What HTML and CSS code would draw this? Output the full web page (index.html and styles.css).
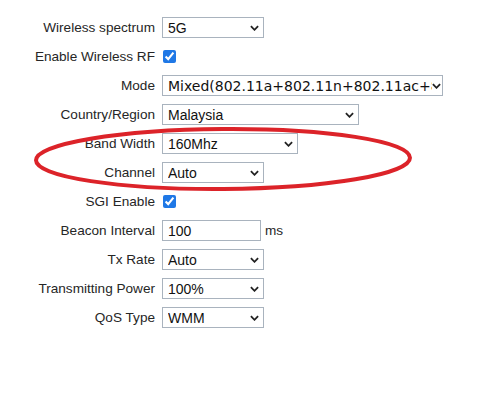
FILE: index.html
```html
<!DOCTYPE html>
<html lang="en">
<head>
    <meta charset="UTF-8">
    <meta name="viewport" content="width=device-width, initial-scale=1.0">
    <title>Wireless Settings</title>
    <link rel="stylesheet" href="styles.css">
</head>
<body>

    <form class="settings">
        <div class="row">
            <label>Wireless spectrum</label>
            <span class="pick w-sm">
                <select><option>5G</option><option>2.4G</option></select>
                <svg class="arrow" viewBox="0 0 10 6"><path d="M1 1l4 4 4-4"/></svg>
            </span>
        </div>
        <div class="row">
            <label>Enable Wireless RF</label>
            <input type="checkbox" class="check" checked>
        </div>
        <div class="row">
            <label>Mode</label>
            <span class="pick w-xl mode">
                <select><option>Mixed(802.11a+802.11n+802.11ac+802.11ax)</option></select>
                <svg class="arrow" viewBox="0 0 10 6"><path d="M1 1l4 4 4-4"/></svg>
            </span>
        </div>
        <div class="row">
            <label>Country/Region</label>
            <span class="pick w-lg">
                <select><option>Malaysia</option></select>
                <svg class="arrow" viewBox="0 0 10 6"><path d="M1 1l4 4 4-4"/></svg>
            </span>
        </div>
        <div class="row">
            <label>Band Width</label>
            <span class="pick w-md">
                <select><option>160Mhz</option><option>80Mhz</option></select>
                <svg class="arrow" viewBox="0 0 10 6"><path d="M1 1l4 4 4-4"/></svg>
            </span>
        </div>
        <div class="row">
            <label>Channel</label>
            <span class="pick w-sm">
                <select><option>Auto</option></select>
                <svg class="arrow" viewBox="0 0 10 6"><path d="M1 1l4 4 4-4"/></svg>
            </span>
        </div>
        <div class="row">
            <label>SGI Enable</label>
            <input type="checkbox" class="check" checked>
        </div>
        <div class="row">
            <label>Beacon Interval</label>
            <span class="field">
                <input type="text" class="text" value="100">
                <span class="unit">ms</span>
            </span>
        </div>
        <div class="row">
            <label>Tx Rate</label>
            <span class="pick w-sm">
                <select><option>Auto</option></select>
                <svg class="arrow" viewBox="0 0 10 6"><path d="M1 1l4 4 4-4"/></svg>
            </span>
        </div>
        <div class="row">
            <label>Transmitting Power</label>
            <span class="pick w-sm">
                <select><option>100%</option></select>
                <svg class="arrow" viewBox="0 0 10 6"><path d="M1 1l4 4 4-4"/></svg>
            </span>
        </div>
        <div class="row">
            <label>QoS Type</label>
            <span class="pick w-sm">
                <select><option>WMM</option></select>
                <svg class="arrow" viewBox="0 0 10 6"><path d="M1 1l4 4 4-4"/></svg>
            </span>
        </div>
    </form>

    <!-- hand-drawn highlight round Band Width / Channel -->
    <svg class="mark" viewBox="0 0 500 396">
        <ellipse cx="223" cy="159" rx="187" ry="30" transform="rotate(-0.4 223 159)"/>
    </svg>

</body>
</html>
```

FILE: styles.css
```css
body {
    margin: 0;
    padding: 0;
    background-color: #fff;
    font-family: "Liberation Sans", Arial, sans-serif;
    font-size: 13.6px;
    color: #262626;
}
.settings {
    padding-top: 13px;
}
.row {
    display: grid;
    grid-template-columns: 155px auto;
    column-gap: 7px;
    align-items: center;
    height: 29px;
}
.row label {
    text-align: right;
    white-space: nowrap;
}
.pick {
    position: relative;
    display: inline-block;
    justify-self: start;
    height: 21px;
}
.pick select {
    appearance: none;
    -webkit-appearance: none;
    box-sizing: border-box;
    width: 100%;
    height: 21px;
    margin: 0;
    padding: 0 20px 0 5px;
    border: 1px solid #a9b3be;
    border-radius: 0;
    background-color: #fff;
    font-family: "Liberation Sans", Arial, sans-serif;
    font-size: 14px;
    color: #111;
    outline: none;
}
.pick .arrow {
    position: absolute;
    right: 5px;
    top: 8px;
    width: 9px;
    height: 6px;
    fill: none;
    stroke: #222;
    stroke-width: 2;
    pointer-events: none;
}
.w-sm { width: 102px; }
.w-md { width: 136px; }
.w-lg { width: 197px; }
.w-xl { width: 281px; }
.mode select {
    font-family: "DejaVu Sans", Verdana, sans-serif;
    font-size: 14px;
    padding-right: 10px;
}
.mode .arrow {
    right: 2px;
}
.check {
    margin: 0 0 0 1px;
    width: 13px;
    height: 13px;
    accent-color: #1f78e6;
}
.field {
    display: flex;
    align-items: center;
    gap: 4px;
}
.text {
    box-sizing: border-box;
    width: 99px;
    height: 21px;
    margin: 0;
    padding: 0 5px;
    border: 1px solid #a9b3be;
    border-radius: 0;
    font-family: "Liberation Sans", Arial, sans-serif;
    font-size: 14px;
    color: #111;
    outline: none;
}
.unit {
    font-size: 13.6px;
}
.mark {
    position: absolute;
    left: 0;
    top: 0;
    width: 500px;
    height: 396px;
    pointer-events: none;
}
.mark ellipse {
    fill: none;
    stroke: #dc2329;
    stroke-width: 4;
}
```
